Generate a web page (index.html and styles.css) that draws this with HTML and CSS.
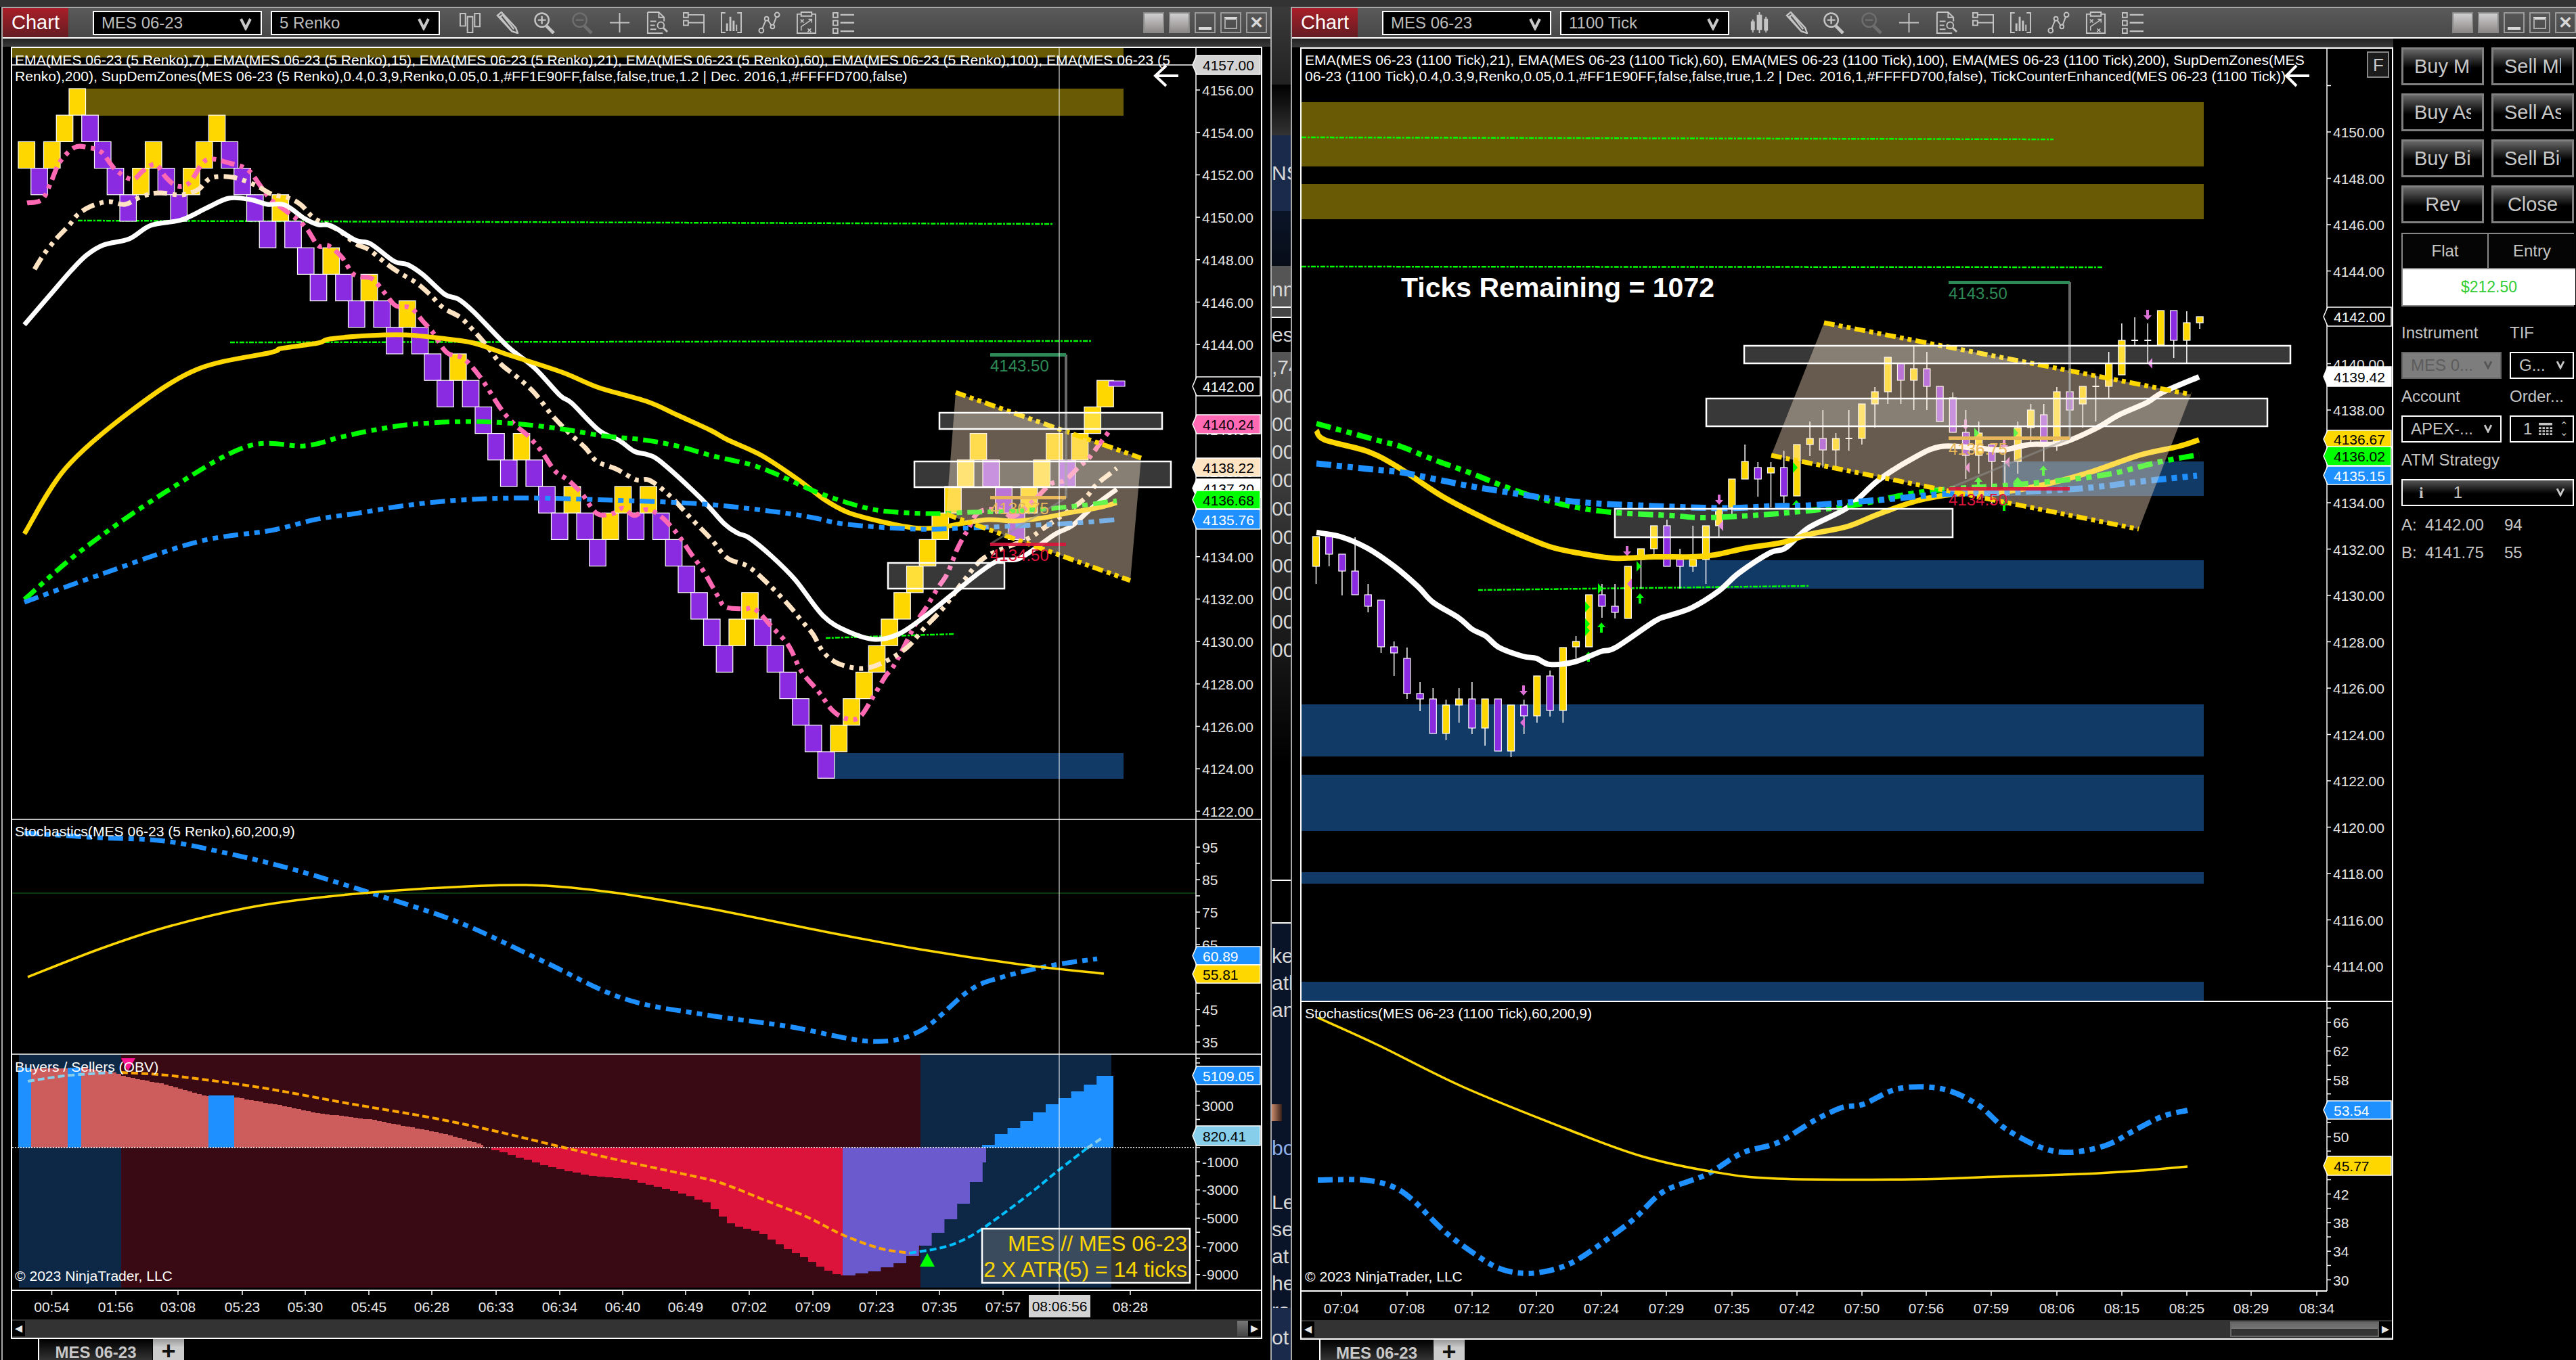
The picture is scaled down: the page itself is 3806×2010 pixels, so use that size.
FILE: index.html
```html
<!DOCTYPE html>
<html lang="en">
<head>
  <meta charset="UTF-8">
  <title>NinjaTrader Charts</title>
  <link rel="stylesheet" href="styles.css">
</head>
<body>
  <!-- icon sheet, used by both toolbars -->
  <svg class="icon-sheet" width="0" height="0">
    <symbol id="i-chev" viewBox="0 0 20 20"><path d="M3 3 L10 17 L17 3" fill="none" stroke="currentColor" stroke-width="4"/></symbol>
    <symbol id="i-renko" viewBox="0 0 34 34"><path d="M2 3h8v19h-8z M13 8h8v24h-8z M24 3h8v20h-8z" fill="none" stroke="currentColor" stroke-width="2"/></symbol>
    <symbol id="i-candle" viewBox="0 0 34 34"><path d="M7 12v20 M17 1v32 M27 8v24" stroke="currentColor" stroke-width="2"/><path d="M4 15h6v13h-6z M13 5h8v23h-8z M24 11h6v18h-6z" fill="currentColor"/></symbol>
    <symbol id="i-pencil" viewBox="0 0 34 34"><path d="M2 6 L8 1 L30 25 L33 33 L24 30 Z M5 9 L10 5 M9 4 L27 27 M5 7 L24 30" fill="none" stroke="currentColor" stroke-width="2.5"/></symbol>
    <symbol id="i-zoomin" viewBox="0 0 34 34"><circle cx="13" cy="13" r="10.5" fill="none" stroke="currentColor" stroke-width="2.5"/><path d="M7 13h12 M13 7v12" stroke="currentColor" stroke-width="2.5"/><path d="M20 22 L31 33" stroke="currentColor" stroke-width="5"/></symbol>
    <symbol id="i-zoomout" viewBox="0 0 34 34"><circle cx="13" cy="13" r="10.5" fill="none" stroke="currentColor" stroke-width="2.5"/><path d="M7 13h12" stroke="currentColor" stroke-width="2.5"/><path d="M20 22 L31 33" stroke="currentColor" stroke-width="5"/></symbol>
    <symbol id="i-plus" viewBox="0 0 34 34"><path d="M2 17h30 M17 2v30" stroke="currentColor" stroke-width="2"/></symbol>
    <symbol id="i-doc" viewBox="0 0 34 34"><path d="M3 1h17l8 8v6 M20 1v8h8 M3 1v32h23" fill="none" stroke="currentColor" stroke-width="2"/><path d="M7 15h9 M7 21h7 M7 27h9" stroke="currentColor" stroke-width="2"/><circle cx="23" cy="21" r="5" fill="none" stroke="currentColor" stroke-width="2"/><path d="M27 25 L33 31" stroke="currentColor" stroke-width="3"/></symbol>
    <symbol id="i-layout" viewBox="0 0 34 34"><path d="M1 2h7v7h-7z M1 14h7v7h-7z M8 5h24v28 M8 17h24" fill="none" stroke="currentColor" stroke-width="2"/></symbol>
    <symbol id="i-indicator" viewBox="0 0 34 34"><path d="M8 2h-6v30h6 M26 2h6v30h-6" fill="none" stroke="currentColor" stroke-width="2"/><path d="M9 18h3v12h-3z M14 8h3v22h-3z M19 14h3v16h-3z M24 20h2v10h-2z" fill="currentColor"/></symbol>
    <symbol id="i-draw" viewBox="0 0 34 34"><path d="M5 30 L13 10 L22 24 L29 5" fill="none" stroke="currentColor" stroke-width="2"/><g fill="#4d4d4d" stroke="currentColor" stroke-width="2"><circle cx="5" cy="29" r="3.5"/><circle cx="13" cy="11" r="3"/><circle cx="22" cy="23" r="3"/><circle cx="29" cy="5" r="3.5"/></g></symbol>
    <symbol id="i-strategy" viewBox="0 0 34 34"><path d="M9 4h-6v29h28v-29h-6 M9 1h16v6h-16z" fill="none" stroke="currentColor" stroke-width="2"/><path d="M8 12l5 5 M13 12l-5 5 M19 26l5 5 M24 26l-5 5 M9 29 L9 23 L24 13 M20 12h5v5" fill="none" stroke="currentColor" stroke-width="1.6"/></symbol>
    <symbol id="i-list" viewBox="0 0 34 34"><path d="M1 2h7v7h-7z M1 14h7v7h-7z M1 26h7v7h-7z" fill="none" stroke="currentColor" stroke-width="2"/><path d="M12 5h21 M12 17h21 M12 30h21" stroke="currentColor" stroke-width="2.5"/></symbol>
    <symbol id="i-calc" viewBox="0 0 24 22"><path d="M1 1h22v4h-22z" fill="currentColor"/><path d="M1 8h4v3h-4z M7 8h4v3h-4z M13 8h4v3h-4z M19 8h4v3h-4z M1 13h4v3h-4z M7 13h4v3h-4z M13 13h4v3h-4z M19 13h4v3h-4z M1 18h4v3h-4z M7 18h4v3h-4z M13 18h4v3h-4z M19 18h4v3h-4z" fill="currentColor"/></symbol>
  </svg>

  <div class="desktop">
    <div class="top-strip"></div>

    <!-- slice of the web page behind the two chart windows -->
    <div class="behind">
      <div class="behind-a"></div>
      <div class="behind-b"></div>
      <div class="behind-navy">NS</div>
      <div class="behind-dark"></div>
      <div class="behind-grey">nn</div>
      <div class="behind-thin"></div>
      <div class="behind-black">ess</div>
      <div class="behind-prices">
        <div>,74</div><div>00</div><div>00</div><div>00</div><div>00</div><div>00</div>
        <div>00</div><div>00</div><div>00</div><div>00</div><div>00</div>
      </div>
      <div class="behind-gap"></div>
      <div class="behind-post">
        <div>ke</div><div>atl</div><div>an</div>
        <div class="behind-avatar"></div>
        <div class="behind-link">bo</div>
        <div>Le</div><div>se</div><div>at</div><div>he</div><div>ro</div>
      </div>
      <div class="behind-foot">ot</div>
    </div>

    <section class="window win-left">
      <div class="titlebar">
        <div class="chart-btn">Chart</div>
        <div class="combos">
          <div class="combo">MES 06-23 <svg class="chev"><use href="#i-chev"/></svg></div>
          <div class="combo">5 Renko <svg class="chev"><use href="#i-chev"/></svg></div>
        </div>
        <div class="tools">
          <svg class="tool"><use href="#i-renko"/></svg>
          <svg class="tool"><use href="#i-pencil"/></svg>
          <svg class="tool"><use href="#i-zoomin"/></svg>
          <svg class="tool tool-off"><use href="#i-zoomout"/></svg>
          <svg class="tool"><use href="#i-plus"/></svg>
          <svg class="tool"><use href="#i-doc"/></svg>
          <svg class="tool"><use href="#i-layout"/></svg>
          <svg class="tool"><use href="#i-indicator"/></svg>
          <svg class="tool"><use href="#i-draw"/></svg>
          <svg class="tool"><use href="#i-strategy"/></svg>
          <svg class="tool"><use href="#i-list"/></svg>
        </div>
        <div class="win-btns">
          <div class="win-btn win-fill"></div>
          <div class="win-btn win-fill"></div>
          <div class="win-btn win-min"></div>
          <div class="win-btn win-max"></div>
          <div class="win-btn win-close">✕</div>
        </div>
      </div>
      <div class="chart-band"></div>
      <div class="chart-frame">
        <svg class="chart" id="chart-left" viewBox="18 71 1845 1879"></svg>
        <div class="scrollbar">
          <div class="scroll-btn">◂</div>
          <div class="scroll-track"></div>
          <div class="scroll-thumb"></div>
          <div class="scroll-btn">▸</div>
        </div>
      </div>
      <div class="tabs">
        <div class="tab">MES 06-23</div>
        <div class="tab-add">+</div>
      </div>
    </section>

    <section class="window win-right">
      <div class="titlebar">
        <div class="chart-btn">Chart</div>
        <div class="combos">
          <div class="combo">MES 06-23 <svg class="chev"><use href="#i-chev"/></svg></div>
          <div class="combo">1100 Tick <svg class="chev"><use href="#i-chev"/></svg></div>
        </div>
        <div class="tools">
          <svg class="tool"><use href="#i-candle"/></svg>
          <svg class="tool"><use href="#i-pencil"/></svg>
          <svg class="tool"><use href="#i-zoomin"/></svg>
          <svg class="tool tool-off"><use href="#i-zoomout"/></svg>
          <svg class="tool"><use href="#i-plus"/></svg>
          <svg class="tool"><use href="#i-doc"/></svg>
          <svg class="tool"><use href="#i-layout"/></svg>
          <svg class="tool"><use href="#i-indicator"/></svg>
          <svg class="tool"><use href="#i-draw"/></svg>
          <svg class="tool"><use href="#i-strategy"/></svg>
          <svg class="tool"><use href="#i-list"/></svg>
        </div>
        <div class="win-btns">
          <div class="win-btn win-fill"></div>
          <div class="win-btn win-fill"></div>
          <div class="win-btn win-min"></div>
          <div class="win-btn win-max"></div>
          <div class="win-btn win-close">✕</div>
        </div>
      </div>
      <div class="win-body">
        <div class="chart-col">
          <div class="chart-band"></div>
          <div class="chart-frame">
            <svg class="chart" id="chart-right" viewBox="1923 72 1611 1879"></svg>
            <div class="scrollbar">
              <div class="scroll-btn">◂</div>
              <div class="scroll-track"></div>
              <div class="scroll-thumb scroll-thumb-wide"></div>
              <div class="scroll-btn">▸</div>
            </div>
          </div>
          <div class="tabs">
            <div class="tab">MES 06-23</div>
            <div class="tab-add">+</div>
          </div>
        </div>

        <aside class="order-panel">
          <div class="order-btns">
            <button class="order-btn"><span>Buy Mkt</span></button>
            <button class="order-btn"><span>Sell Mkt</span></button>
            <button class="order-btn"><span>Buy Ask</span></button>
            <button class="order-btn"><span>Sell Ask</span></button>
            <button class="order-btn"><span>Buy Bid</span></button>
            <button class="order-btn"><span>Sell Bid</span></button>
            <button class="order-btn order-btn-center"><span>Rev</span></button>
            <button class="order-btn order-btn-center"><span>Close</span></button>
          </div>
          <div class="position">
            <div class="pos-cell">Flat</div>
            <div class="pos-cell">Entry</div>
            <div class="pos-value">$212.50</div>
          </div>
          <div class="field-labels field-first"><span>Instrument</span><span>TIF</span></div>
          <div class="field-row">
            <div class="field field-wide field-off">MES 0... <svg class="chev"><use href="#i-chev"/></svg></div>
            <div class="field field-small">G... <svg class="chev"><use href="#i-chev"/></svg></div>
          </div>
          <div class="field-labels"><span>Account</span><span>Order...</span></div>
          <div class="field-row">
            <div class="field field-wide">APEX-... <svg class="chev"><use href="#i-chev"/></svg></div>
            <div class="field field-small field-qty">
              <span>1</span>
              <svg class="calc"><use href="#i-calc"/></svg>
              <span class="spin">⌃<br>⌄</span>
            </div>
          </div>
          <div class="field-labels"><span>ATM Strategy</span></div>
          <div class="field field-atm">
            <span class="atm-info">i</span><span class="atm-num">1</span>
            <svg class="chev"><use href="#i-chev"/></svg>
          </div>
          <div class="quote"><span class="q-side">A:</span><span class="q-price">4142.00</span><span>94</span></div>
          <div class="quote"><span class="q-side">B:</span><span class="q-price">4141.75</span><span>55</span></div>
        </aside>
      </div>
    </section>
  </div>

  <script src="chart.js"></script>
</body>
</html>
```
FILE: styles.css
```css
body {
  margin: 0;
  background: #000;
  font-family: "Liberation Sans", Arial, sans-serif;
  overflow: hidden;
}

.icon-sheet {
  position: absolute;
}

.desktop {
  position: relative;
  width: 3806px;
  height: 2010px;
  background: #000;
  overflow: hidden;
}

.top-strip {
  height: 10px;
  background: #333;
}

/* web page seen between the windows */
.behind {
  position: absolute;
  left: 1879px;
  top: 10px;
  width: 28px;
  height: 2000px;
  display: flex;
  flex-direction: column;
  font-size: 30px;
  color: #d8d8d8;
  overflow: hidden;
  white-space: nowrap;
}

.behind-a { height: 115px; flex: none; background: linear-gradient(#3a3a3a, #222); }
.behind-b { height: 75px; flex: none; background: linear-gradient(#000, #333); }
.behind-navy { height: 112px; line-height: 112px; flex: none; background: #1a2a4a; }
.behind-dark { height: 81px; flex: none; background: linear-gradient(#0b1528, #070d18); }
.behind-grey { height: 62px; line-height: 70px; flex: none; background: #555; border-bottom: 2px solid #fff; box-sizing: border-box; }
.behind-thin { height: 15px; flex: none; background: #444; border-bottom: 2px solid #fff; box-sizing: border-box; }
.behind-black { height: 50px; line-height: 50px; flex: none; background: #000; }
.behind-prices { height: 780px; flex: none; background: linear-gradient(#555, #000 78%); }
.behind-prices div { height: 41.8px; line-height: 46px; }
.behind-gap { height: 63px; flex: none; background: #000; border-top: 2px solid #fff; box-sizing: border-box; }
.behind-post { height: 570px; flex: none; background: #0a1428; padding-top: 28px; box-sizing: border-box; border-top: 2px solid #fff; }
.behind-post div { height: 40px; line-height: 40px; }
.behind-post div.behind-avatar { height: 25px; margin: 119px 0 20px; width: 15px; background: linear-gradient(90deg, #c98a6a, #3a2018); }
.behind-post div.behind-link { color: #8fb0ea; margin-bottom: 40px; }
.behind-foot { flex: 1; line-height: 88px; background: #1a2a4a; }

/* chart windows */
.window {
  position: absolute;
  top: 10px;
  height: 2000px;
  box-sizing: border-box;
  background: #000;
  border-left: 2px solid #a8a8a8;
  border-right: 2px solid #a8a8a8;
}

.win-left {
  left: 2px;
  width: 1877px;
}

.win-right {
  left: 1907px;
  width: 1899px;
  border-right: 0;
}

.titlebar {
  height: 47px;
  box-sizing: border-box;
  display: flex;
  align-items: center;
  border-top: 2px solid #a8a8a8;
  border-bottom: 2px solid #fff;
  background: linear-gradient(#5a5a5a, #484848);
}

.chart-btn {
  width: 97px;
  height: 43px;
  font-size: 29px;
  line-height: 43px;
  text-align: center;
  color: #fff;
  background: linear-gradient(#a81f28, #641c22);
  flex: none;
}

.combos {
  display: flex;
  gap: 13px;
  margin-left: 36px;
  flex: none;
}

.combo {
  width: 250px;
  height: 36px;
  box-sizing: border-box;
  border: 2px solid #fff;
  background: #000;
  color: #bdbdbd;
  font-size: 24px;
  line-height: 32px;
  padding-left: 11px;
  position: relative;
}

.chev {
  width: 20px;
  height: 20px;
  color: #c8c8c8;
  position: absolute;
  right: 12px;
  top: 7px;
}

.tools {
  display: flex;
  gap: 22.2px;
  margin-left: 28px;
  color: #c4c4c4;
}

.tool {
  width: 33px;
  height: 33px;
}

.tool-off {
  color: #6e6e6e;
}

.win-btns {
  display: flex;
  gap: 7px;
  margin-left: auto;
  margin-right: 5px;
}

.win-btn {
  width: 31px;
  height: 31px;
  box-sizing: border-box;
  border: 2px solid #9a9a9a;
  color: #d8d8d8;
  text-align: center;
  font-size: 25px;
  font-weight: bold;
  line-height: 27px;
}

.win-fill {
  background: linear-gradient(#d0d0d0, #8f8a8a);
  border-color: #888;
}

.win-min {
  background: linear-gradient(#d8d8d8 0, #d8d8d8 100%) no-repeat center 20px / 19px 4px;
}

.win-max {
  background: linear-gradient(#d8d8d8 0, #d8d8d8 100%) no-repeat center 5px / 19px 4px;
  position: relative;
}

.win-max::after {
  content: "";
  position: absolute;
  left: 4px;
  right: 4px;
  top: 7px;
  bottom: 4px;
  border: 2px solid #a8a8a8;
  border-top: 0;
}

.win-right .win-btns {
  margin-right: 0;
}

.chart-band {
  height: 12px;
  background: linear-gradient(#222, #3a3a3a);
}

.chart-frame {
  width: 1849px;
  margin-left: 12px;
  box-sizing: border-box;
  border: 2px solid #fff;
  background: #000;
}

.chart {
  display: block;
  width: 1845px;
  height: 1879px;
}

.scrollbar {
  height: 27px;
  background: #333;
  display: flex;
  align-items: stretch;
  padding: 2px 0;
  box-sizing: border-box;
}

.scroll-btn {
  width: 19px;
  background: #000;
  color: #e8e8e8;
  font-size: 22px;
  line-height: 22px;
  text-align: center;
  flex: none;
  overflow: hidden;
}

.scroll-track {
  flex: 1;
}

.scroll-thumb {
  width: 16px;
  background: linear-gradient(#777, #444);
}

.tabs {
  display: flex;
  margin-left: 52px;
}

.tab {
  width: 169px;
  height: 31px;
  box-sizing: border-box;
  border-left: 2px solid #fff;
  background: linear-gradient(#000, #333);
  color: #c8c8c8;
  font-size: 24px;
  font-weight: bold;
  line-height: 40px;
  text-align: center;
  overflow: hidden;
}

.tab-add {
  width: 46px;
  height: 31px;
  margin-left: 1px;
  background: linear-gradient(#999, #ccc 40%);
  color: #111;
  font-size: 36px;
  font-weight: bold;
  line-height: 36px;
  text-align: center;
  overflow: hidden;
}

/* right window, chart plus order entry */
.win-body {
  display: flex;
}

.chart-col {
  width: 1627px;
  flex: none;
}

.win-right .chart-band {
  height: 13px;
}

.win-right .chart-frame {
  width: 1615px;
}

.win-right .chart {
  width: 1611px;
}

.win-right .scroll-thumb-wide {
  width: 220px;
  border: 2px solid #666;
  box-sizing: border-box;
  background: linear-gradient(#666, #777 48%, #333 50%, #333);
}

.win-right .tabs {
  margin-left: 40px;
}

.win-right .tab {
  width: 168px;
  height: 30px;
}

.win-right .tab-add {
  height: 30px;
}

.order-panel {
  width: 255px;
  margin-left: 12px;
  padding-top: 13px;
  color: #c4c4c4;
  font-size: 24px;
  flex: none;
}

.order-btns {
  display: grid;
  grid-template-columns: 122px 122px;
  gap: 12px 11px;
}

.order-btn {
  height: 56px;
  padding: 0;
  border: 3px solid #808080;
  background: linear-gradient(#666, #000 55%);
  color: #c8c8c8;
  font-family: inherit;
  font-size: 29px;
  text-align: center;
}

.order-btn span {
  display: block;
  width: 84px;
  margin: 0 auto;
  text-align: left;
  overflow: hidden;
  white-space: nowrap;
}

.order-btn-center span {
  text-align: center;
}

.position {
  display: grid;
  grid-template-columns: 127px 128px;
  margin-top: 14px;
  border: 2px solid #888;
  box-sizing: border-box;
  width: 255px;
}

.pos-cell {
  height: 52px;
  line-height: 50px;
  text-align: center;
  background: #050505;
  color: #c4c4c4;
  border-bottom: 2px solid #888;
  box-sizing: border-box;
}

.pos-cell:first-child {
  border-right: 2px solid #888;
}

.pos-value {
  grid-column: 1 / 3;
  height: 53px;
  line-height: 53px;
  text-align: center;
  background: #fff;
  color: #32cd32;
  font-size: 23px;
}

.field-labels {
  display: flex;
  height: 40px;
  line-height: 40px;
  margin: 6px 0 8px;
}

.field-first {
  margin-top: 19px;
}

.field-labels span:first-child {
  width: 160px;
}

.field-row {
  display: flex;
  gap: 12px;
}

.field {
  height: 40px;
  line-height: 36px;
  box-sizing: border-box;
  border: 2px solid #fff;
  background: #000;
  color: #c4c4c4;
  position: relative;
  padding-left: 12px;
  white-space: nowrap;
}

.field .chev {
  width: 18px;
  height: 14px;
  top: 10px;
  right: 9px;
}

.field-wide {
  width: 148px;
}

.field-small {
  width: 95px;
}

.field-off {
  background: #7d7d7d;
  border-color: #666;
  color: #5c5c5c;
  padding-left: 12px;
}

.field-off .chev {
  color: #555;
}

.field-qty {
  display: flex;
  align-items: center;
  padding-left: 18px;
}

.calc {
  width: 22px;
  height: 20px;
  margin-left: 9px;
  color: #c4c4c4;
}

.spin {
  font-size: 15px;
  line-height: 10px;
  margin-left: 10px;
}

.field-atm {
  width: 255px;
  background: linear-gradient(#555, #000 55%);
}

.atm-info {
  font-family: "Liberation Serif", serif;
  font-weight: bold;
  margin-left: 12px;
}

.atm-num {
  margin-left: 44px;
}

.quote {
  display: flex;
  height: 41px;
  line-height: 41px;
}

.q-side {
  width: 35px;
}

.q-price {
  width: 117px;
}

.field-atm + .quote {
  margin-top: 7px;
}

/* svg chart text */
.chart text {
  font-family: "Liberation Sans", Arial, sans-serif;
  font-size: 21px;
  fill: #e6e6e6;
}

.chart .t-legend {
  font-size: 21.1px;
  fill: #fff;
}

.chart .t-big {
  font-size: 41px;
  font-weight: bold;
  fill: #fff;
}

.chart .t-box {
  font-size: 32px;
  fill: #ffd700;
}

.chart .t-risk {
  font-size: 24px;
}
```
FILE: chart.js
```js
// draws both charts into their svg elements, all points are in page pixels
const RENKO_LEVELS = [
  [0,'y',2],[1,'p',3],[2,'y',2],[3,'y',1],[4,'y',0],[5,'p',1],[6,'p',2],[7,'p',3],[8,'p',4],[9,'y',3],
  [10,'y',2],[11,'p',3],[12,'p',4],[13,'y',3],[14,'y',2],[15,'y',1],[16,'p',2],[17,'p',3],[18,'p',4],[19,'p',5],
  [20,'y',4],[21,'p',5],[22,'p',6],[23,'p',7],[24,'y',6],[25,'p',7],[26,'p',8],[27,'y',7],[28,'p',8],[29,'p',9],
  [30,'y',8],[31,'p',9],[32,'p',10],[33,'p',11],[34,'y',10],[35,'p',11],[36,'p',12],[37,'p',13],[38,'p',14],[39,'y',13],
  [40,'p',14],[41,'p',15],[42,'p',16],[43,'y',15],[44,'p',16],[45,'p',17],[46,'y',16],[47,'y',15],[48,'p',16],[49,'y',15],
  [50,'p',16],[51,'p',17],[52,'p',18],[53,'p',19],[54,'p',20],[55,'p',21],[56,'y',20],[57,'y',19],[58,'p',20],[59,'p',21],
  [60,'p',22],[61,'p',23],[62,'p',24],[63,'p',25],[64,'y',24],[65,'y',23],[66,'y',22],[67,'y',21],[68,'y',20],[69,'y',19],
  [70,'y',18],[71,'y',17],[72,'y',16],[73,'y',15],[74,'y',14],[75,'y',13],[76,'p',14],[77,'p',15],[78,'p',16],[79,'y',15],
  [80,'y',14],[81,'y',13],[82,'p',14],[83,'y',13],[84,'y',12],[85,'y',11]
];

// color, top, bottom, wick top, wick bottom
const CANDLES = [
  ['y',793,837,793,863],['p',793,819,786,837],['p',819,844,819,880],['p',844,879,794,879],['p',879,896,863,905],
  ['p',887,956,887,965],['p',956,965,948,999],['p',973,1025,957,1033],['p',1025,1033,1008,1051],['p',1033,1084,1017,1084],
  ['y',1042,1084,1034,1094],['y',1033,1042,1017,1068],['p',1033,1076,1008,1085],['y',1033,1076,1033,1102],['p',1033,1110,1033,1110],
  ['y',1042,1110,1042,1119],['p',1042,1058,1034,1085],['y',999,1058,999,1068],['p',999,1050,991,1059],['y',957,1050,957,1068],
  ['y',948,956,940,973],['y',879,956,879,956],['p',879,896,863,913],['p',896,905,863,914],['y',837,914,837,914],
  ['y',811,827,811,870],['y',777,811,777,827],['p',777,837,768,837],['p',827,837,811,870],['y',827,837,777,845],
  ['y',777,827,777,863],['y',751,777,751,793],['y',708,750,708,760],['y',682,708,657,708],['p',691,708,683,734],
  ['y',691,699,683,750],['p',691,733,666,743],['y',657,733,657,733],['y',648,657,623,674],['p',648,665,606,691],
  ['y',648,665,640,691],['y',648,648,606,666],['y',597,648,597,657],['y',579,597,572,632],['y',528,579,529,597],
  ['p',537,562,537,597],['y',545,562,512,606],['p',545,571,520,606],['p',571,623,571,623],['p',588,639,580,639],
  ['p',639,673,606,708],['y',640,673,623,700],['p',657,682,657,745],['y',682,682,657,733],['y',632,682,623,700],
  ['y',606,632,597,657],['p',613,657,597,682],['y',579,657,572,666],['p',579,606,547,648],['y',571,597,571,632],
  ['y',571,571,555,623],['y',537,571,520,588],['y',503,554,478,554],['y',503,503,469,510],['y',503,503,478,537],
  ['y',459,510,459,510],['p',459,503,459,529],['y',477,503,460,537],['y',468,477,468,486]
];

const COL = { y: '#ffd700', p: '#8a2be2' };
const DASH_A = '20 8 6 8 6 8';
const DASH_B = '22 8 8 8 8 8';

function pts(list) {
  return list.map(p => p[0] + ',' + p[1]).join(' ');
}

// smooth curve through the points (catmull-rom)
function line(list, color, width, dash) {
  let d = `M${list[0][0]} ${list[0][1]}`;
  for (let i = 0; i < list.length - 1; i++) {
    const a = list[Math.max(i - 1, 0)];
    const b = list[i];
    const c = list[i + 1];
    const e = list[Math.min(i + 2, list.length - 1)];
    const c1 = [b[0] + (c[0] - a[0]) / 6, b[1] + (c[1] - a[1]) / 6];
    const c2 = [c[0] - (e[0] - b[0]) / 6, c[1] - (e[1] - b[1]) / 6];
    d += ` C${c1[0].toFixed(1)} ${c1[1].toFixed(1)} ${c2[0].toFixed(1)} ${c2[1].toFixed(1)} ${c[0]} ${c[1]}`;
  }
  const ds = dash ? ` stroke-dasharray="${dash}"` : '';
  return `<path d="${d}" fill="none" stroke="${color}" stroke-width="${width}" stroke-linejoin="round"${ds}/>`;
}

function rect(x, y, w, h, fill, extra) {
  return `<rect x="${x}" y="${y}" width="${w}" height="${h}" fill="${fill}" ${extra || ''}/>`;
}

function seg(x1, y1, x2, y2, color, width, dash) {
  const d = dash ? ` stroke-dasharray="${dash}"` : '';
  return `<line x1="${x1}" y1="${y1}" x2="${x2}" y2="${y2}" stroke="${color}" stroke-width="${width}"${d}/>`;
}

function text(x, y, str, cls, attrs) {
  return `<text x="${x}" y="${y}" class="${cls || ''}" ${attrs || ''}>${str}</text>`;
}

// value tag on the price axis with its small point on the left
function tag(x, y1, y2, width, bg, fg, str, edge) {
  const mid = (y1 + y2) / 2;
  const poly = `${x + 6},${y1} ${x + width},${y1} ${x + width},${y2} ${x + 6},${y2} ${x},${mid}`;
  return `<polygon points="${poly}" fill="${bg}" stroke="${edge || '#fff'}" stroke-width="1.5"/>` +
    `<text x="${x + 15}" y="${mid + 8}" style="fill:${fg}">${str}</text>`;
}

function arrowBack(x1, x2, hx, y) {
  return seg(x1, y, x2, y, '#fff', 4) +
    `<polyline points="${hx},${y - 15} ${x1},${y} ${hx},${y + 15}" fill="none" stroke="#fff" stroke-width="4"/>`;
}

// stairs along a profile, closed against base
function stairs(profile, x0, x1, base, step) {
  const w = step || 18.8;
  const out = [[x0, base]];
  for (let x = x0; x < x1; x += w) {
    let y = profile[profile.length - 1][1];
    for (let i = 0; i < profile.length - 1; i++) {
      if (x >= profile[i][0] && x <= profile[i + 1][0]) {
        const t = (x - profile[i][0]) / (profile[i + 1][0] - profile[i][0]);
        y = Math.round(profile[i][1] + (profile[i + 1][1] - profile[i][1]) * t);
      }
    }
    out.push([x, y], [Math.min(x + w, x1), y]);
  }
  out.push([x1, base]);
  return pts(out);
}

function riskBox(x1, x2, g, e, r) {
  let s = '';
  s += seg(x2, g + 2, x2, e + 3, 'rgba(150,150,150,.7)', 4);
  s += seg(x2, e + 3, x1, r + 2, 'rgba(150,150,150,.5)', 3);
  s += rect(x1, g, x2 - x1, 5, '#2e8b57');
  s += text(x1, g + 27, '4143.50', 't-risk', 'style="fill:#2e8b57"');
  s += rect(x1, e, x2 - x1, 5, '#e8b75a');
  s += text(x1, e + 27, '4136.75', 't-risk', 'style="fill:#e8b75a"');
  s += rect(x1, r, x2 - x1, 5, '#dc143c', 'opacity=".9"');
  s += text(x1, r + 27, '4134.50', 't-risk', 'style="fill:#dc143c"');
  return s;
}

function pattern(p) {
  return `<polygon points="${pts(p)}" fill="rgba(255,228,196,.4)"/>` +
    line([p[0], p[1]], '#ffd700', 7, '16 6 6 6 6 6') +
    line([p[3], p[2]], '#ffd700', 7, '16 6 6 6 6 6');
}

function glassBox(x1, x2, y1, y2) {
  return rect(x1, y1, x2 - x1, y2 - y1, 'rgba(255,255,255,.22)', 'stroke="#fff" stroke-width="2.5"');
}

function drawLeft() {
  let s = '';

  // zones
  s += rect(18, 71, 1642, 14, '#695a05');
  s += rect(120, 131, 1540, 40, '#695a05');
  s += rect(1230, 1113, 430, 38, '#123a66');
  s += line([[115, 326], [1555, 331]], '#00ff00', 2.5, '7 2 3 2');
  s += line([[340, 506], [1612, 504]], '#00ff00', 2.5, '7 2 3 2');
  s += line([[1220, 943], [1409, 937]], '#00ff00', 2.5, '7 2 3 2');

  // renko bricks
  RENKO_LEVELS.forEach(b => {
    s += rect(27 + b[0] * 18.75, 131 + b[2] * 39.2, 24.5, 39.2, COL[b[1]], 'stroke="#fff" stroke-width="1.2"');
  });
  s += rect(1638, 563, 24, 8, COL.p, 'stroke="#fff" stroke-width="1"');

  // moving averages
  s += line([[40,300],[62,295],[75,270],[88,240],[110,218],[130,218],[150,225],[170,250],[195,265],[212,252],[230,243],[245,262],[262,275],[280,270],[300,240],[315,235],[335,240],[365,250],[385,275],[400,295],[420,310],[450,334],[470,363],[485,363],[505,380],[520,403],[532,409],[550,412],[570,435],[585,452],[607,455],[625,475],[640,492],[660,521],[685,530],[710,558],[740,604],[760,627],[780,644],[800,667],[820,696],[840,710],[860,730],[882,759],[905,759],[920,751],[937,762],[955,753],[975,762],[1000,788],[1020,817],[1040,845],[1060,880],[1072,897],[1100,900],[1115,900],[1140,926],[1165,954],[1184,992],[1210,1023],[1230,1050],[1250,1062],[1270,1060],[1290,1030],[1308,1000],[1323,980],[1354,920],[1369,897],[1385,870],[1400,847],[1415,810],[1430,783],[1446,757],[1476,753],[1497,763],[1527,740],[1553,715],[1573,710],[1594,690],[1609,677],[1624,657],[1642,633]], '#ff69b4', 7, DASH_A);
  s += line([[51,398],[64,377],[83,353],[102,333],[115,317],[134,305],[160,298],[185,302],[210,290],[236,285],[268,288],[293,280],[312,263],[344,262],[376,273],[402,287],[427,293],[445,303],[465,323],[500,340],[525,360],[545,369],[570,389],[590,403],[615,418],[635,435],[655,455],[680,469],[700,489],[720,512],[740,538],[765,558],[790,581],[815,613],[840,639],[865,662],[882,682],[910,693],[940,709],[960,710],[990,733],[1020,765],[1050,796],[1075,825],[1105,837],[1135,863],[1165,894],[1184,917],[1201,937],[1216,963],[1237,980],[1272,988],[1303,980],[1339,958],[1364,930],[1395,897],[1425,857],[1456,823],[1517,797],[1543,780],[1599,740],[1619,717],[1640,700],[1650,692]], '#ffe4c4', 7, DASH_A);
  s += line([[36,480],[73,437],[105,400],[128,377],[153,362],[191,353],[223,333],[268,325],[306,307],[338,293],[370,295],[395,302],[421,303],[450,323],[470,332],[490,334],[525,355],[547,360],[582,386],[602,391],[625,406],[657,435],[677,442],[700,461],[750,512],[790,544],[827,584],[845,596],[885,636],[915,651],[937,667],[957,672],[977,683],[1035,736],[1070,774],[1090,788],[1107,795],[1140,822],[1175,857],[1216,910],[1252,933],[1293,945],[1328,937],[1364,913],[1405,880],[1446,847],[1476,828],[1507,825],[1558,790],[1584,777],[1614,750],[1650,723]], '#fff', 7);
  s += line([[36,789],[97,692],[194,607],[291,546],[400,521],[415,515],[470,507],[487,501],[545,496],[600,495],[660,501],[700,507],[750,524],[830,550],[885,573],[955,593],[1000,613],[1050,636],[1075,650],[1125,673],[1181,710],[1216,737],[1252,757],[1298,770],[1349,780],[1385,780],[1425,773],[1461,768],[1502,770],[1543,765],[1584,757],[1624,750],[1650,743]], '#ffd700', 7);
  s += line([[36,886],[121,813],[243,728],[364,660],[450,659],[500,647],[550,636],[610,627],[690,623],[760,626],[830,634],[890,644],[950,650],[1000,659],[1050,673],[1110,687],[1150,702],[1201,725],[1252,743],[1303,755],[1374,759],[1436,757],[1507,755],[1589,748],[1650,740]], '#00ff00', 7, DASH_B);
  s += line([[36,890],[146,850],[291,801],[400,784],[465,768],[525,759],[600,747],[680,739],[775,736],[900,739],[1040,745],[1150,757],[1201,765],[1252,775],[1354,782],[1436,780],[1507,777],[1589,773],[1650,768]], '#1e90ff', 7, DASH_B);

  // drawings over the bars
  s += pattern([[1412,580],[1686,677],[1670,858],[1398,760]]);
  s += riskBox(1463, 1575, 522, 733, 802);
  s += glassBox(1388, 1717, 610, 634);
  s += glassBox(1351, 1730, 682, 720);
  s += glassBox(1312, 1484, 832, 870);

  // stochastics panel
  s += seg(18, 1320, 1767, 1320, '#0f4d0f', 1.5);
  s += line([[36,1231],[146,1238],[243,1243],[340,1262],[437,1286],[558,1323],[680,1364],[801,1420],[922,1476],[1044,1500],[1165,1517],[1286,1539],[1359,1524],[1432,1464],[1481,1444],[1553,1427],[1621,1417]], '#1e90ff', 7, DASH_B);
  s += line([[41,1444],[146,1403],[243,1371],[364,1342],[485,1325],[631,1313],[777,1308],[898,1318],[1044,1342],[1214,1376],[1359,1403],[1505,1425],[1631,1439]], '#ffd700', 3.5);

  // buyers / sellers panel
  s += rect(28, 1559, 151, 344, '#0d2847');
  s += rect(179, 1559, 1181, 344, '#3a0a14');
  s += rect(1360, 1559, 282, 344, '#0d2847');
  const red = [[27,1580],[120,1578],[166,1585],[185,1592],[239,1602],[258,1608],[300,1620],[346,1622],[408,1633],[466,1645],[548,1655],[650,1675],[714,1693]];
  s += `<polygon points="${stairs(red, 46, 714, 1696, 7)}" fill="#cd5c5c"/>`;
  s += rect(27, 1578, 19, 118, '#1e90ff') + rect(100, 1578, 20, 118, '#1e90ff') + rect(308, 1619, 38, 77, '#1e90ff');
  s += `<polygon points="${stairs([[714,1696],[816,1727],[870,1738],[925,1743],[1000,1763],[1038,1777],[1076,1810],[1115,1820],[1153,1843],[1191,1863],[1226,1883],[1245,1885]], 714, 1245, 1696, 12)}" fill="#dc143c"/>`;
  s += `<polygon points="${stairs([[1245,1885],[1287,1878],[1325,1865],[1344,1853],[1364,1835],[1383,1815],[1402,1795],[1421,1770],[1438,1738],[1457,1710]], 1245, 1457, 1696)}" fill="#6a5acd"/>`;
  s += `<polygon points="${stairs([[1451,1692],[1470,1676],[1488,1667],[1507,1657],[1526,1644],[1545,1632],[1564,1623],[1582,1613],[1601,1603],[1620,1590],[1645,1590]], 1451, 1645, 1696)}" fill="#1e90ff"/>`;
  s += seg(18, 1696, 1767, 1696, '#fff', 1.5, '2 2');
  s += line([[41,1598],[96,1590],[166,1585]], '#87ceeb', 4, '10 5');
  s += line([[179,1585],[255,1590],[383,1607],[510,1630],[638,1652],[733,1672],[829,1695],[925,1717],[1000,1733],[1064,1748],[1128,1773],[1191,1798],[1245,1825],[1300,1845],[1344,1852]], '#ffa500', 4, '10 5');
  s += line([[1344,1852],[1395,1843],[1434,1827],[1478,1797],[1523,1763],[1561,1732],[1606,1697]], '#00bfff', 4, '10 5');
  s += line([[1606,1697],[1628,1682]], '#87ceeb', 4, '10 5');
  s += `<polygon points="179,1564 200,1564 189,1583" fill="#ff1493"/>`;
  s += `<polygon points="1370,1852 1381,1872 1359,1872" fill="#00ff00"/>`;
  s += rect(1451, 1816, 307, 80, 'rgba(128,128,128,.4)', 'stroke="#fff" stroke-width="2.5"');
  s += text(1754, 1849, 'MES // MES 06-23', 't-box', 'text-anchor="end"');
  s += text(1754, 1887, '2 X ATR(5) = 14 ticks', 't-box', 'text-anchor="end"');

  // separators and axes
  s += seg(18, 1211, 1863, 1211, '#fff', 1.5);
  s += seg(18, 1558, 1863, 1558, '#fff', 1.5);
  s += seg(18, 1907, 1863, 1907, '#fff', 2);
  s += seg(1767, 71, 1767, 1907, '#fff', 1.5);

  for (let p = 4156; p >= 4122; p -= 2) {
    const y = 133 + (4156 - p) * 31.35;
    s += seg(1767, y, 1773, y, '#fff', 1.5);
    s += text(1776, y + 8, p + '.00');
  }
  [95, 85, 75, 65, 55, 45, 35].forEach((v, i) => {
    const y = 1252 + i * 48;
    s += seg(1767, y, 1773, y, '#fff', 1.5) + seg(1767, y + 24, 1773, y + 24, '#fff', 1.5);
    if (v !== 55) s += text(1776, y + 8, v);
  });
  [3000, -1000, -3000, -5000, -7000, -9000].forEach(v => {
    s += text(1776, 1696 - v * 0.0208 + 8, v);
  });
  for (let y = 1571; y < 1900; y += 20.85) {
    s += seg(1767, y, 1773, y, '#fff', 1.5);
  }

  // time axis
  const labels = [[76.5,'00:54'],[171,'01:56'],[263,'03:08'],[358,'05:23'],[451,'05:30'],[545,'05:45'],[638,'06:28'],[733,'06:33'],[827,'06:34'],[920,'06:40'],[1013,'06:49'],[1107,'07:02'],[1201,'07:09'],[1295,'07:23'],[1388,'07:35'],[1482,'07:57'],[1670,'08:28']];
  labels.forEach(l => {
    s += seg(l[0], 1907, l[0], 1914, '#fff', 1.5);
    s += text(l[0], 1939, l[1], '', 'text-anchor="middle"');
  });

  // crosshair
  s += seg(1565, 71, 1565, 1914, '#fff', 1);
  s += seg(18, 96, 1767, 96, '#fff', 1.5);
  s += rect(1520, 1914, 91, 33, '#d3d3d3');
  s += text(1565.5, 1938, '08:06:56', '', 'text-anchor="middle" style="fill:#000"');

  // value tags
  s += tag(1762, 82, 110, 100, '#d3d3d3', '#000', '4157.00');
  s += tag(1762, 557, 585, 100, '#000', '#fff', '4142.00');
  s += tag(1762, 613, 641, 100, '#ff69b4', '#000', '4140.24');
  s += tag(1762, 677, 704, 100, '#ffe4c4', '#000', '4138.22');
  s += tag(1762, 708, 735, 100, '#fff', '#000', '4137.20');
  s += tag(1762, 725, 752, 100, '#00ff00', '#000', '4136.68');
  s += tag(1762, 753, 782, 100, '#1e90ff', '#fff', '4135.76');
  s += tag(1762, 1399, 1426, 100, '#1e90ff', '#fff', '60.89');
  s += tag(1762, 1426, 1453, 100, '#ffd700', '#000', '55.81');
  s += tag(1762, 1576, 1603, 100, '#1e90ff', '#fff', '5109.05');
  s += tag(1762, 1664, 1693, 100, '#87ceeb', '#000', '820.41');

  // legends
  s += text(22, 96, 'EMA(MES 06-23 (5 Renko),7), EMA(MES 06-23 (5 Renko),15), EMA(MES 06-23 (5 Renko),21), EMA(MES 06-23 (5 Renko),60), EMA(MES 06-23 (5 Renko),100), EMA(MES 06-23 (5', 't-legend');
  s += text(22, 120, 'Renko),200), SupDemZones(MES 06-23 (5 Renko),0.4,0.3,9,Renko,0.05,0.1,#FF1E90FF,false,false,true,1.2 | Dec. 2016,1,#FFFFD700,false)', 't-legend');
  s += arrowBack(1707, 1741, 1723, 112);
  s += text(22, 1236, 'Stochastics(MES 06-23 (5 Renko),60,200,9)', 't-legend');
  s += text(22, 1584, 'Buyers /  Sellers (OBV)', 't-legend');
  s += text(22, 1893, '© 2023 NinjaTrader, LLC', 't-legend');
  return s;
}

function drawRight() {
  let s = '';
  const zones = [[1923,151,95,'#695a05'],[1923,272,52,'#695a05'],[2959,682,51,'#123a66'],[2481,828,42,'#123a66'],[1923,1041,77,'#123a66'],[1923,1145,83,'#123a66'],[1923,1289,17,'#123a66'],[1923,1451,29,'#123a66']];
  zones.forEach(z => {
    s += rect(z[0], z[1], 3256 - z[0], z[2], z[3]);
  });
  s += line([[1923,203],[3034,206]], '#00ff00', 2.5, '7 2 3 2');
  s += line([[1923,394],[3107,395]], '#00ff00', 2.5, '7 2 3 2');
  s += line([[2184,872],[2672,866]], '#00ff00', 2.5, '7 2 3 2');

  // candles
  CANDLES.forEach((c, i) => {
    const x = 1944.5 + 19.2 * i;
    s += seg(x, c[3], x, c[4], '#fff', 1.5);
    if (c[1] === c[2]) {
      s += seg(x - 5, c[1], x + 5, c[1], '#fff', 2);
    } else {
      s += rect(x - 5, c[1], 10, c[2] - c[1], COL[c[0]], 'stroke="#fff" stroke-width="1.2"');
    }
  });

  // trade arrows
  [[2347,963],[2366,920],[2423,877],[2654,739],[2923,705],[2981,705],[3019,688],[2961,740]].forEach(a => {
    s += `<path d="M${a[0]} ${a[1]} l6 7 h-4 v8 h-4 v-8 h-4 z" fill="#00ff00"/>`;
  });
  [[2251,1028],[2404,822],[2540,746],[2904,635],[2961,665],[3173,473]].forEach(a => {
    s += `<path d="M${a[0]} ${a[1]} l-6 -7 h4 v-8 h4 v8 h4 z" fill="#da70d6"/>`;
  });
  [[2249,1068],[2407,863],[2542,777],[2906,691],[2965,683],[3176,537]].forEach(a => {
    s += `<path d="M${a[0] - 3} ${a[1]} l7 -8 v16 z" fill="#da70d6"/>`;
  });
  [[2421,837],[2345,897],[2345,922],[2345,932],[2364,870],[2652,691],[2920,640],[2978,640]].forEach(a => {
    s += `<path d="M${a[0] + 4} ${a[1]} l-7 -8 v16 z" fill="#00ff00"/>`;
  });

  // moving averages
  s += line([[1945,787],[1980,793],[2020,810],[2060,837],[2095,867],[2117,890],[2155,913],[2175,930],[2195,940],[2215,957],[2250,970],[2270,973],[2290,982],[2327,978],[2365,963],[2387,957],[2445,918],[2465,910],[2500,898],[2540,873],[2569,847],[2615,817],[2638,810],[2672,780],[2730,750],[2775,710],[2827,677],[2867,660],[2919,662],[2959,665],[2999,657],[3045,655],[3097,633],[3131,613],[3172,595],[3195,580],[3249,557]], '#fff', 8);
  s += line([[1945,636],[1957,650],[2020,667],[2065,690],[2130,733],[2195,767],[2245,790],[2290,808],[2330,817],[2385,825],[2445,823],[2500,823],[2534,820],[2580,810],[2632,802],[2672,790],[2730,778],[2775,760],[2833,740],[2890,730],[2959,727],[3017,717],[3091,697],[3160,673],[3218,660],[3249,650]], '#ffd700', 8);
  s += line([[1945,626],[2040,652],[2070,660],[2120,680],[2170,698],[2220,718],[2270,735],[2320,748],[2380,757],[2470,762],[2520,765],[2615,760],[2730,748],[2821,730],[2890,722],[2959,718],[3045,710],[3120,700],[3189,683],[3249,672]], '#00ff00', 8, DASH_B);
  s += line([[1945,685],[2020,693],[2070,698],[2120,708],[2170,718],[2230,728],[2290,737],[2345,743],[2420,747],[2545,751],[2620,748],[2672,747],[2787,738],[2873,730],[2959,728],[3074,722],[3160,712],[3246,703]], '#1e90ff', 9, DASH_B);

  s += pattern([[2695,477],[3237,583],[3160,782],[2617,673]]);
  s += riskBox(2879, 3058, 415, 645, 720);
  s += glassBox(2577, 3384, 511, 537);
  s += glassBox(2521, 3350, 589, 630);
  s += glassBox(2386, 2885, 752, 794);

  s += text(2070, 439, 'Ticks Remaining = 1072', 't-big');

  // stochastics panel
  s += line([[1947,1744],[2016,1744],[2058,1754],[2089,1775],[2132,1818],[2174,1850],[2216,1875],[2258,1882],[2300,1875],[2332,1861],[2374,1832],[2416,1800],[2458,1761],[2521,1736],[2574,1704],[2626,1689],[2679,1657],[2721,1637],[2753,1632],[2805,1609],[2868,1609],[2921,1632],[2963,1668],[3016,1696],[3058,1703],[3111,1693],[3153,1671],[3195,1650],[3232,1641]], '#1e90ff', 8, DASH_B);
  s += line([[1947,1504],[2037,1545],[2163,1607],[2321,1671],[2426,1709],[2532,1732],[2626,1742],[2826,1743],[2953,1739],[3079,1735],[3163,1730],[3232,1724]], '#ffd700', 3.5);

  // separators and axes
  s += seg(1923, 1480, 3534, 1480, '#fff', 2);
  s += seg(1923, 1908, 3438, 1908, '#fff', 2);
  s += seg(3438, 72, 3438, 1908, '#fff', 1.5);

  for (let p = 4152; p >= 4114; p -= 2) {
    const y = 195 + (4150 - p) * 34.25;
    s += seg(3438, y, 3444, y, '#fff', 1.5);
    if (p <= 4150 && p !== 4142 && p !== 4136) s += text(3447, y + 8, p + '.00');
  }
  for (let v = 68; v >= 30; v -= 2) {
    const y = 1511 + (66 - v) * 10.57;
    s += seg(3438, y, 3444, y, '#fff', 1.5);
  }
  [66, 62, 58, 50, 42, 38, 34, 30].forEach(v => {
    s += text(3447, 1511 + (66 - v) * 10.57 + 8, v);
  });

  const labels = [[1982,'07:04'],[2079,'07:08'],[2175,'07:12'],[2270,'07:20'],[2366,'07:24'],[2462,'07:29'],[2559,'07:35'],[2655,'07:42'],[2751,'07:50'],[2846,'07:56'],[2942,'07:59'],[3039,'08:06'],[3135,'08:15'],[3231,'08:25'],[3326,'08:29'],[3423,'08:34']];
  labels.forEach(l => {
    s += seg(l[0], 1908, l[0], 1915, '#fff', 1.5);
    s += text(l[0], 1941, l[1], '', 'text-anchor="middle"');
  });

  s += tag(3433, 454, 482, 100, '#000', '#fff', '4142.00');
  s += tag(3433, 542, 571, 100, '#fff', '#000', '4139.42');
  s += tag(3433, 636, 662, 100, '#ffd700', '#000', '4136.67');
  s += tag(3433, 660, 688, 100, '#00ff00', '#000', '4136.02');
  s += tag(3433, 689, 716, 100, '#1e90ff', '#fff', '4135.15');
  s += tag(3433, 1627, 1654, 100, '#1e90ff', '#fff', '53.54');
  s += tag(3433, 1709, 1737, 100, '#ffd700', '#000', '45.77');

  // full screen button
  s += rect(3498, 77, 31, 37, '#1c1c1c', 'stroke="#888" stroke-width="2"');
  s += text(3506, 105, 'F', '', 'style="font-size:26px;fill:#ccc"');

  s += text(1928, 96, 'EMA(MES 06-23 (1100 Tick),21), EMA(MES 06-23 (1100 Tick),60), EMA(MES 06-23 (1100 Tick),100), EMA(MES 06-23 (1100 Tick),200), SupDemZones(MES', 't-legend');
  s += text(1928, 120, '06-23 (1100 Tick),0.4,0.3,9,Renko,0.05,0.1,#FF1E90FF,false,false,true,1.2 | Dec. 2016,1,#FFFFD700,false), TickCounterEnhanced(MES 06-23 (1100 Tick))', 't-legend');
  s += arrowBack(3378, 3412, 3393, 112);
  s += text(1928, 1505, 'Stochastics(MES 06-23 (1100 Tick),60,200,9)', 't-legend');
  s += text(1928, 1894, '© 2023 NinjaTrader, LLC', 't-legend');
  return s;
}

document.getElementById('chart-left').innerHTML = drawLeft();
document.getElementById('chart-right').innerHTML = drawRight();
```
